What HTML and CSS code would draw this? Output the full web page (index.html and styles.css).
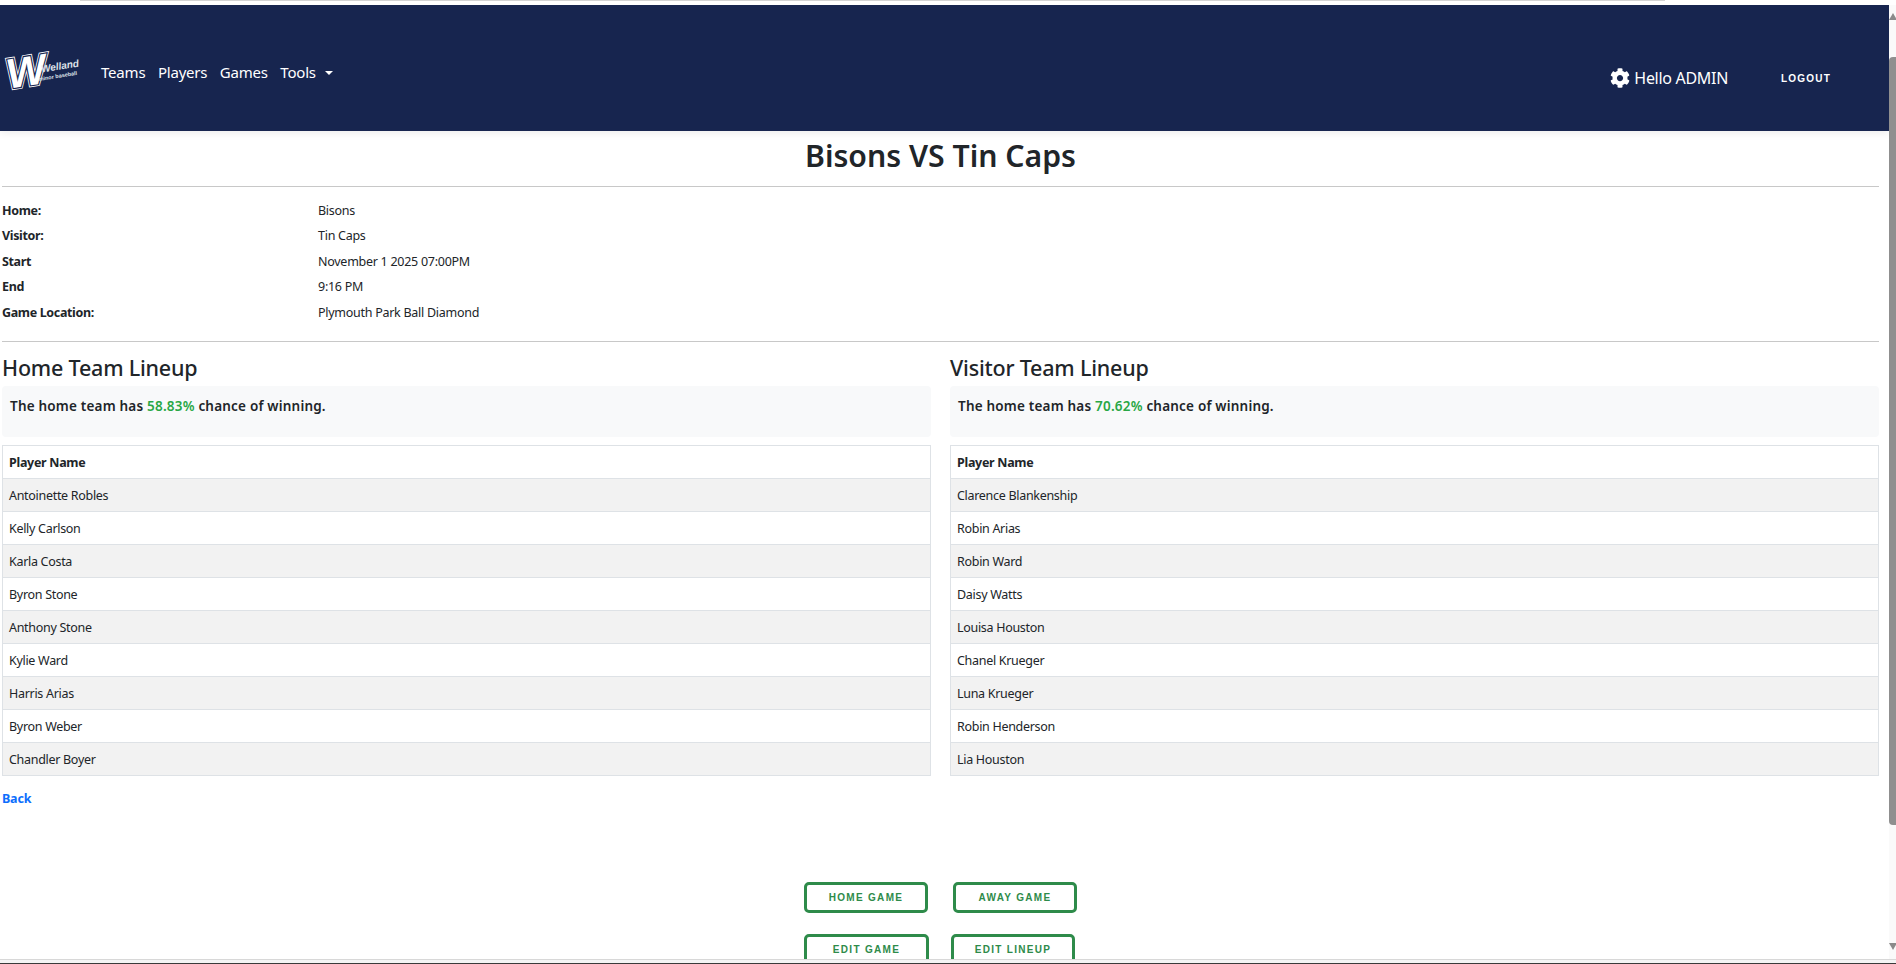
FILE: index.html
```html
<!DOCTYPE html>
<html lang="en">
<head>
  <meta charset="UTF-8" />
  <meta name="viewport" content="width=device-width, initial-scale=1.0"/>
  <title>Bisons VS Tin Caps</title>
  <link rel="stylesheet" href="styles.css">
</head>
<body>
  <div class="top-strip"><div class="top-line"></div></div>

  <div class="window">
    <div class="page">
      <nav class="navbar">
        <div class="nav-left">
          <a class="brand" href="#">
            <svg class="logo" viewBox="0 0 80 46" width="80" height="46">
              <g transform="rotate(-9 40 23)">
                <text class="logo-w logo-w-edge" x="2" y="38">W</text>
                <text class="logo-w logo-w-gap" x="2" y="38">W</text>
                <text class="logo-w" x="2" y="38">W</text>
                <text class="logo-name" x="37" y="27">Welland</text>
                <text class="logo-sub" x="33" y="35">minor baseball</text>
              </g>
            </svg>
          </a>
          <a class="nav-link" href="#">Teams</a>
          <a class="nav-link" href="#">Players</a>
          <a class="nav-link" href="#">Games</a>
          <a class="nav-link dropdown" href="#">Tools</a>
        </div>
        <div class="nav-right">
          <a class="hello" href="#">
            <svg class="gear" viewBox="0 0 512 512" width="20" height="20"><path fill="#fff" d="M487.4 315.7l-42.6-24.6c4.3-23.2 4.3-47 0-70.2l42.6-24.6c4.9-2.8 7.1-8.6 5.5-14-11.1-35.6-30-67.8-54.7-94.6-3.8-4.1-10-5.1-14.8-2.3L380.8 110c-17.9-15.4-38.5-27.3-60.8-35.1V25.8c0-5.6-3.9-10.5-9.4-11.7-36.7-8.2-74.3-7.8-109.2 0-5.5 1.2-9.4 6.1-9.4 11.7V75c-22.2 7.9-42.8 19.8-60.8 35.1L88.7 85.5c-4.9-2.8-11-1.9-14.8 2.3-24.7 26.7-43.6 58.9-54.7 94.6-1.7 5.4.6 11.2 5.5 14L67.3 221c-4.3 23.2-4.3 47 0 70.2l-42.6 24.6c-4.9 2.8-7.1 8.6-5.5 14 11.1 35.6 30 67.8 54.7 94.6 3.8 4.1 10 5.1 14.8 2.3l42.6-24.6c17.9 15.4 38.5 27.3 60.8 35.1v49.2c0 5.6 3.9 10.5 9.4 11.7 36.7 8.2 74.3 7.8 109.2 0 5.5-1.2 9.4-6.1 9.4-11.7v-49.2c22.2-7.9 42.8-19.8 60.8-35.1l42.6 24.6c4.9 2.8 11 1.9 14.8-2.3 24.7-26.7 43.6-58.9 54.7-94.6 1.5-5.5-.7-11.3-5.6-14.1zM256 336c-44.1 0-80-35.9-80-80s35.9-80 80-80 80 35.9 80 80-35.9 80-80 80z"/></svg>
            Hello ADMIN
          </a>
          <a class="logout" href="#">LOGOUT</a>
        </div>
      </nav>

      <main class="content">
        <h1>Bisons VS Tin Caps</h1>
        <hr>

        <div class="game-info">
          <div class="info-row"><strong>Home:</strong><span>Bisons</span></div>
          <div class="info-row"><strong>Visitor:</strong><span>Tin Caps</span></div>
          <div class="info-row"><strong>Start</strong><span>November 1 2025 07:00PM</span></div>
          <div class="info-row"><strong>End</strong><span>9:16 PM</span></div>
          <div class="info-row"><strong>Game Location:</strong><span>Plymouth Park Ball Diamond</span></div>
        </div>
        <hr class="hr-lower">

        <div class="lineups">
          <section>
            <h2>Home Team Lineup</h2>
            <div class="odds">The home team has <span class="pct">58.83%</span> chance of winning.</div>
            <table>
              <thead><tr><th>Player Name</th></tr></thead>
              <tbody>
                <tr><td>Antoinette Robles</td></tr>
                <tr><td>Kelly Carlson</td></tr>
                <tr><td>Karla Costa</td></tr>
                <tr><td>Byron Stone</td></tr>
                <tr><td>Anthony Stone</td></tr>
                <tr><td>Kylie Ward</td></tr>
                <tr><td>Harris Arias</td></tr>
                <tr><td>Byron Weber</td></tr>
                <tr><td>Chandler Boyer</td></tr>
              </tbody>
            </table>
          </section>
          <section>
            <h2>Visitor Team Lineup</h2>
            <div class="odds">The home team has <span class="pct">70.62%</span> chance of winning.</div>
            <table>
              <thead><tr><th>Player Name</th></tr></thead>
              <tbody>
                <tr><td>Clarence Blankenship</td></tr>
                <tr><td>Robin Arias</td></tr>
                <tr><td>Robin Ward</td></tr>
                <tr><td>Daisy Watts</td></tr>
                <tr><td>Louisa Houston</td></tr>
                <tr><td>Chanel Krueger</td></tr>
                <tr><td>Luna Krueger</td></tr>
                <tr><td>Robin Henderson</td></tr>
                <tr><td>Lia Houston</td></tr>
              </tbody>
            </table>
          </section>
        </div>

        <a class="back" href="#">Back</a>

        <div class="actions">
          <div class="action-row">
            <a class="btn-green" href="#">HOME GAME</a>
            <a class="btn-green" href="#">AWAY GAME</a>
          </div>
          <div class="action-row action-row-edit">
            <a class="btn-green btn-wide" href="#">EDIT GAME</a>
            <a class="btn-green" href="#">EDIT LINEUP</a>
          </div>
        </div>
      </main>
    </div>

    <div class="scrollbar">
      <div class="arrow-up"></div>
      <div class="thumb"></div>
      <div class="arrow-down"></div>
    </div>
  </div>

  <div class="bottom-strip"></div>
</body>
</html>
```

FILE: styles.css
```css
:root {
  --navy: #17254f;
  --text-color: #212529;
  --line: #dee2e6;
  --green: #2e8b4a;
  --pct-green: #28a745;
}

* {
  box-sizing: border-box;
  margin: 0;
  padding: 0;
}

html, body {
  height: 964px;
  overflow: hidden;
}

body {
  font-family: "Noto Sans", "Open Sans", sans-serif;
  color: var(--text-color);
  background: #fff;
  display: flex;
  flex-direction: column;
}

a {
  text-decoration: none;
}

.top-strip {
  height: 5px;
  flex: none;
  padding: 0 231px 0 80px;
}

.top-line {
  height: 1px;
  background: #d4d4d4;
}

.window {
  flex: 1;
  min-height: 0;
  display: flex;
}

.page {
  flex: 1;
  min-width: 0;
  overflow: hidden;
}

/* navbar */
.navbar {
  height: 126px;
  background: var(--navy);
  display: flex;
  justify-content: space-between;
  align-items: center;
  padding: 0 58px 0 4px;
  box-shadow: 0 2px 8px rgba(0, 0, 0, 0.08);
}

.nav-left {
  display: flex;
  align-items: center;
  gap: 12.5px;
  padding-top: 8px;
}

.nav-right {
  display: flex;
  align-items: center;
  gap: 53px;
  padding-top: 20px;
}

.brand {
  display: flex;
  margin-right: 4.5px;
  margin-top: -8px;
}

.logo {
  overflow: visible;
}

.logo-w {
  font-family: "Liberation Sans", sans-serif;
  font-weight: bold;
  font-style: italic;
  font-size: 42px;
  fill: #fff;
}

.logo-w-edge {
  stroke: #fff;
  stroke-width: 4;
}

.logo-w-gap {
  stroke: var(--navy);
  stroke-width: 2.4;
}

.logo-name {
  font-family: "Liberation Sans", sans-serif;
  font-weight: bold;
  font-style: italic;
  font-size: 10px;
  fill: #dfe2ea;
}

.logo-sub {
  font-family: "Liberation Sans", sans-serif;
  font-weight: bold;
  font-size: 5.5px;
  fill: #dfe2ea;
}

.nav-link {
  color: #fff;
  font-size: 15px;
  letter-spacing: -0.2px;
}

.dropdown::after {
  content: "";
  display: inline-block;
  margin-left: 9px;
  vertical-align: 3px;
  border-top: 4px solid #fff;
  border-left: 4px solid transparent;
  border-right: 4px solid transparent;
}

.hello {
  color: #fff;
  font-size: 16px;
  letter-spacing: -0.3px;
  display: flex;
  align-items: center;
  gap: 4px;
}

.logout {
  color: #fff;
  font-family: "Liberation Sans", sans-serif;
  font-weight: bold;
  font-size: 10px;
  letter-spacing: 1.2px;
}

/* page body */
.content {
  padding: 0 10px 0 2px;
}

h1 {
  font-size: 30.2px;
  font-weight: 600;
  text-align: center;
  line-height: 40px;
  margin-top: 5px;
}

hr {
  border: none;
  border-top: 1px solid #c8c8c8;
  margin-top: 10px;
}

.hr-lower {
  margin-top: 16px;
}

.game-info {
  margin-top: 11px;
  font-size: 12.5px;
  letter-spacing: -0.27px;
}

.info-row {
  display: flex;
  height: 25.4px;
  line-height: 25.4px;
}

.info-row strong {
  width: 316px;
  font-weight: 700;
  letter-spacing: -0.35px;
}

.lineups {
  display: grid;
  grid-template-columns: 1fr 1fr;
  gap: 19px;
  margin-top: 10px;
}

h2 {
  font-size: 21.5px;
  font-weight: 500;
  letter-spacing: -0.2px;
  line-height: 32px;
}

.odds {
  height: 51px;
  margin-top: 2px;
  padding: 10px 8px;
  background: #f8f9fa;
  border-radius: 4px;
  font-size: 13.5px;
  font-weight: 600;
  letter-spacing: 0.2px;
  line-height: 20px;
}

.pct {
  color: var(--pct-green);
}

table {
  width: 100%;
  margin-top: 8px;
  border-collapse: collapse;
  font-size: 12.5px;
  letter-spacing: -0.3px;
}

th, td {
  height: 33px;
  padding: 2px 6px 0;
  border: 1px solid var(--line);
  text-align: left;
}

th {
  font-weight: 700;
}

tbody tr:nth-child(odd) {
  background: #f2f2f2;
}

.back {
  display: block;
  margin-top: 14px;
  color: #0d6efd;
  font-size: 12.5px;
  font-weight: 700;
  letter-spacing: -0.2px;
}

.actions {
  margin-top: 75px;
}

.action-row {
  display: flex;
  justify-content: center;
  gap: 25px;
}

.action-row-edit {
  gap: 22px;
  margin-top: 21px;
  padding-right: 2px;
}

.btn-green {
  display: block;
  width: 124px;
  height: 31px;
  border: 3px solid var(--green);
  border-radius: 5px;
  color: var(--green);
  font-family: "Liberation Sans", sans-serif;
  font-weight: bold;
  font-size: 10px;
  letter-spacing: 1.3px;
  line-height: 25px;
  text-align: center;
}

.btn-wide {
  width: 125px;
}

/* browser chrome */
.scrollbar {
  width: 7px;
  flex: none;
  background: #fafafa;
  display: flex;
  flex-direction: column;
  align-items: center;
}

.arrow-up {
  margin-top: 8px;
  border-bottom: 7px solid #8a8a8a;
  border-left: 4px solid transparent;
  border-right: 4px solid transparent;
}

.thumb {
  width: 7px;
  height: 768px;
  margin-top: 37px;
  background: #8f8f8f;
  border-radius: 4px 0 0 4px;
}

.arrow-down {
  margin-top: auto;
  margin-bottom: 9px;
  border-top: 7px solid #8a8a8a;
  border-left: 4px solid transparent;
  border-right: 4px solid transparent;
}

.bottom-strip {
  height: 5px;
  flex: none;
  background: #f4f4f4;
  border-top: 1px solid #d8d8d8;
  border-bottom: 1px solid #3a3a3a;
}
```
